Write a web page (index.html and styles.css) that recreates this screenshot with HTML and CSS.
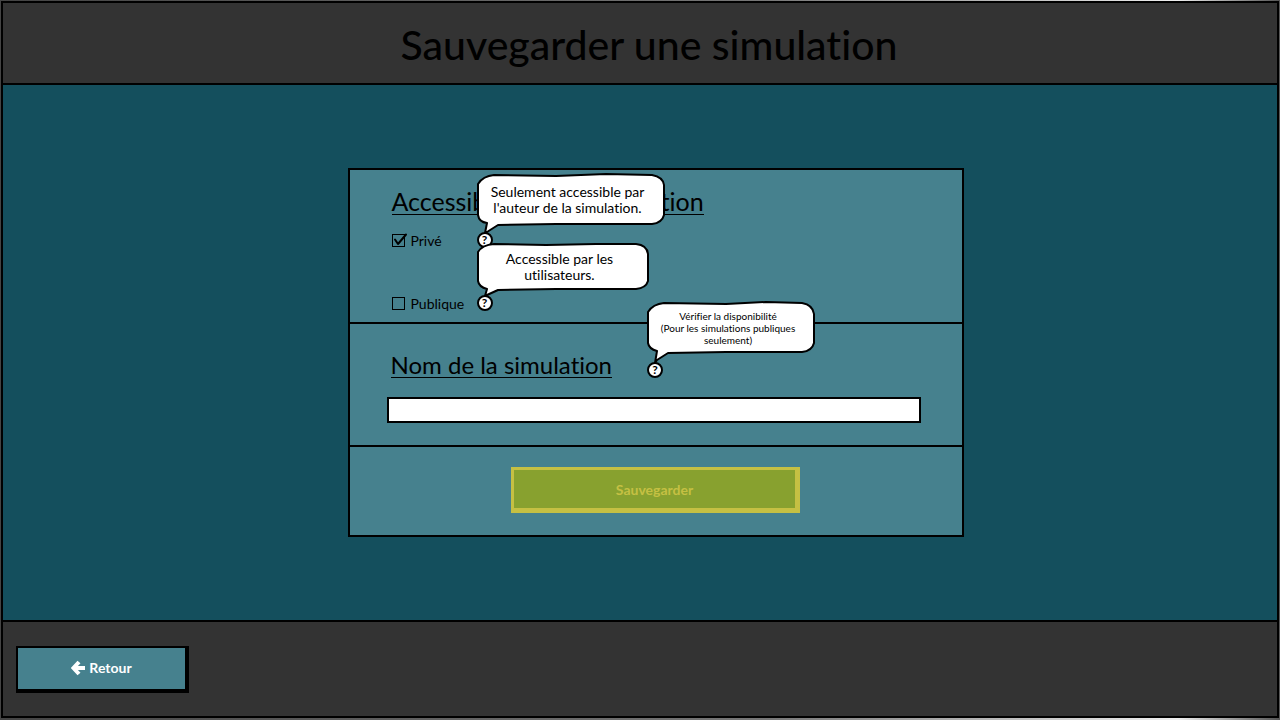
FILE: index.html
```html
<!DOCTYPE html>
<html lang="fr">
<head>
<meta charset="utf-8">
<meta name="viewport" content="width=device-width, initial-scale=1">
<title>Sauvegarder une simulation</title>
<link rel="stylesheet" href="styles.css">
</head>
<body>
<div class="page">
  <header class="header"><h1 class="title">Sauvegarder une simulation</h1></header>
  <main class="main">
    <form class="card">
      <section class="section access">
        <h2 class="heading heading-wide">Accessibilité de la simulation</h2>
        <div class="option">
          <label class="choice" for="prive">
            <input class="box" type="checkbox" id="prive" checked>
            <svg class="check" width="16" height="14" viewBox="0 0 16 14" aria-hidden="true"><path d="M3 6.500L6 11L14 1.500" fill="none" stroke="#000" stroke-width="2" stroke-linecap="round" stroke-linejoin="round"/></svg>
            Privé
          </label>
          <div class="help">
            <button class="help-button" type="button" aria-describedby="tip-prive">?</button>
            <div class="tip tip-large" id="tip-prive" role="tooltip">
              <svg class="bubble" viewBox="0 0 190 62" aria-hidden="true"><path d="M2 11Q7 3 18 2L80 3L130 1L176 2Q187 4 188 12V42Q186 50 176 51L80 51L22 52L11 59L9 60L11 50Q3 49 2 42Z"/></svg>
              <p class="tip-text">Seulement accessible par<br>l'auteur de la simulation.</p>
            </div>
          </div>
        </div>
        <div class="option">
          <label class="choice" for="publique">
            <input class="box" type="checkbox" id="publique">
            <svg class="check" width="16" height="14" viewBox="0 0 16 14" aria-hidden="true"><path d="M3 6.500L6 11L14 1.500" fill="none" stroke="#000" stroke-width="2" stroke-linecap="round" stroke-linejoin="round"/></svg>
            Publique
          </label>
          <div class="help">
            <button class="help-button" type="button" aria-describedby="tip-publique">?</button>
            <div class="tip tip-medium" id="tip-publique" role="tooltip">
              <svg class="bubble" viewBox="0 0 174 56" aria-hidden="true"><path d="M2 10Q6 3 18 2L70 3L120 2L160 2Q171 3 172 12V39Q170 46 160 47L80 47L22 48L11 53L9 54L11 47Q3 45 2 39Z"/></svg>
              <p class="tip-text">Accessible par les<br>utilisateurs.</p>
            </div>
          </div>
        </div>
      </section>
      <section class="section naming">
        <div class="name-row">
          <h2 class="heading"><label for="nom">Nom de la simulation</label></h2>
          <div class="help">
            <button class="help-button" type="button" aria-describedby="tip-nom">?</button>
            <div class="tip tip-small" id="tip-nom" role="tooltip">
              <svg class="bubble" viewBox="0 0 170 64" aria-hidden="true"><path d="M2 11Q7 3 18 2L80 3L120 1L156 2Q167 4 168 13V42Q166 50 156 51L80 51L22 52L11 59L9 62L11 50Q3 48 2 42Z"/></svg>
              <p class="tip-text">Vérifier la disponibilité<br>(Pour les simulations publiques<br>seulement)</p>
            </div>
          </div>
        </div>
        <input class="field" type="text" id="nom">
      </section>
      <section class="section actions">
        <button class="save" type="submit">Sauvegarder</button>
      </section>
    </form>
  </main>
  <footer class="footer">
    <button class="back" type="button">
      <svg class="arrow" width="14" height="16" viewBox="0 0 14 16" aria-hidden="true"><path d="M8 2L2.500 8L8 14M3 8H14" fill="none" stroke="#fff" stroke-width="4"/></svg>
      Retour
    </button>
  </footer>
</div>
</body>
</html>
```
FILE: styles.css
```css
* { box-sizing: border-box; }

body {
  margin: 0;
  background: linear-gradient(90deg, #444, #777 60%, #eee 92%, #555);
  color: #000;
  font-family: Lato, "Open Sans", sans-serif;
  font-size: 14px;
  font-variant-ligatures: none;
}

h1, h2, p { margin: 0; font-weight: 400; }
button, input { font: inherit; }

.page {
  display: flex;
  flex-direction: column;
  min-height: 100vh;
  padding: 1px 1px 2px;
}

.header {
  display: flex;
  align-items: center;
  justify-content: center;
  height: 84px;
  padding: 4px 0 0 18px;
  border: 2px solid #000;
  background: #333;
}

.title { font-size: 41px; line-height: 48px; font-weight: 500; }

.main {
  display: flex;
  flex: 1;
  align-items: center;
  justify-content: center;
  padding-left: 31px;
  border: solid #000;
  border-width: 0 2px;
  background: #144f5d;
}

.card {
  width: 616px;
  border: 2px solid #000;
  background: #46818e;
}

.section + .section { border-top: 2px solid #000; }

.access { padding: 19px 42px 11px; }

.heading {
  width: max-content;
  border-bottom: 1px solid #000;
  font-size: 24px;
  line-height: 25px;
}

.heading-wide { font-size: 25px; }

.option {
  display: flex;
  align-items: center;
  height: 16px;
  margin-top: 17px;
}

.option + .option { margin-top: 47px; }

.choice {
  display: flex;
  position: relative;
  align-items: center;
  gap: 6px;
  width: 85px;
}

.box {
  appearance: none;
  width: 13px;
  height: 13px;
  margin: 0;
  border: 1px solid #000;
}

.check { display: none; position: absolute; top: 1px; left: 0; }
.box:checked + .check { display: block; }

.help { position: relative; width: 16px; height: 16px; }

.help-button {
  display: block;
  width: 16px;
  height: 16px;
  padding: 0;
  border: 2px solid #000;
  border-radius: 50%;
  background: #fff;
  color: #000;
  font-size: 12px;
  font-weight: 700;
  line-height: 12px;
  text-align: center;
}

.tip {
  position: absolute;
  bottom: 13px;
  left: -1px;
  text-align: center;
  white-space: nowrap;
}

.tip-large { width: 190px; height: 62px; padding-top: 11px; }
.tip-medium { width: 174px; height: 56px; padding-top: 9px; }
.tip-small { width: 170px; height: 64px; padding-top: 9px; font-size: 10px; }

.bubble {
  position: absolute;
  top: 0;
  left: 0;
  width: 100%;
  height: 100%;
  fill: #fff;
  stroke: #000;
  stroke-width: 2;
  stroke-linejoin: round;
}

.tip-text { position: relative; padding-right: 6px; line-height: 16px; }
.tip-small .tip-text { line-height: 12px; }

.naming { padding: 28px 41px 22px 37px; }
.name-row { display: flex; align-items: flex-end; gap: 35px; padding-left: 4px; }

.field {
  display: block;
  width: 100%;
  height: 26px;
  margin-top: 19px;
  padding: 0 6px;
  border: 2px solid #000;
  background: #fff;
}

.actions { display: flex; justify-content: center; padding: 20px 0 22px; }

.save {
  width: 289px;
  height: 46px;
  padding: 0;
  border: solid #c5c043;
  border-width: 3px 5px 5px 3px;
  background: #88a12f;
  color: #c5c043;
  font-weight: 700;
}

.footer {
  display: flex;
  align-items: center;
  height: 98px;
  padding: 0 13px;
  border: 2px solid #000;
  background: #333;
}

.back {
  display: flex;
  align-items: center;
  justify-content: center;
  gap: 4px;
  width: 173px;
  height: 47px;
  padding: 0 0 2px;
  border: solid #000;
  border-width: 2px 4px 4px 2px;
  background: #46818e;
  color: #fff;
  font-weight: 700;
}

.arrow { margin-top: 2px; }
```
